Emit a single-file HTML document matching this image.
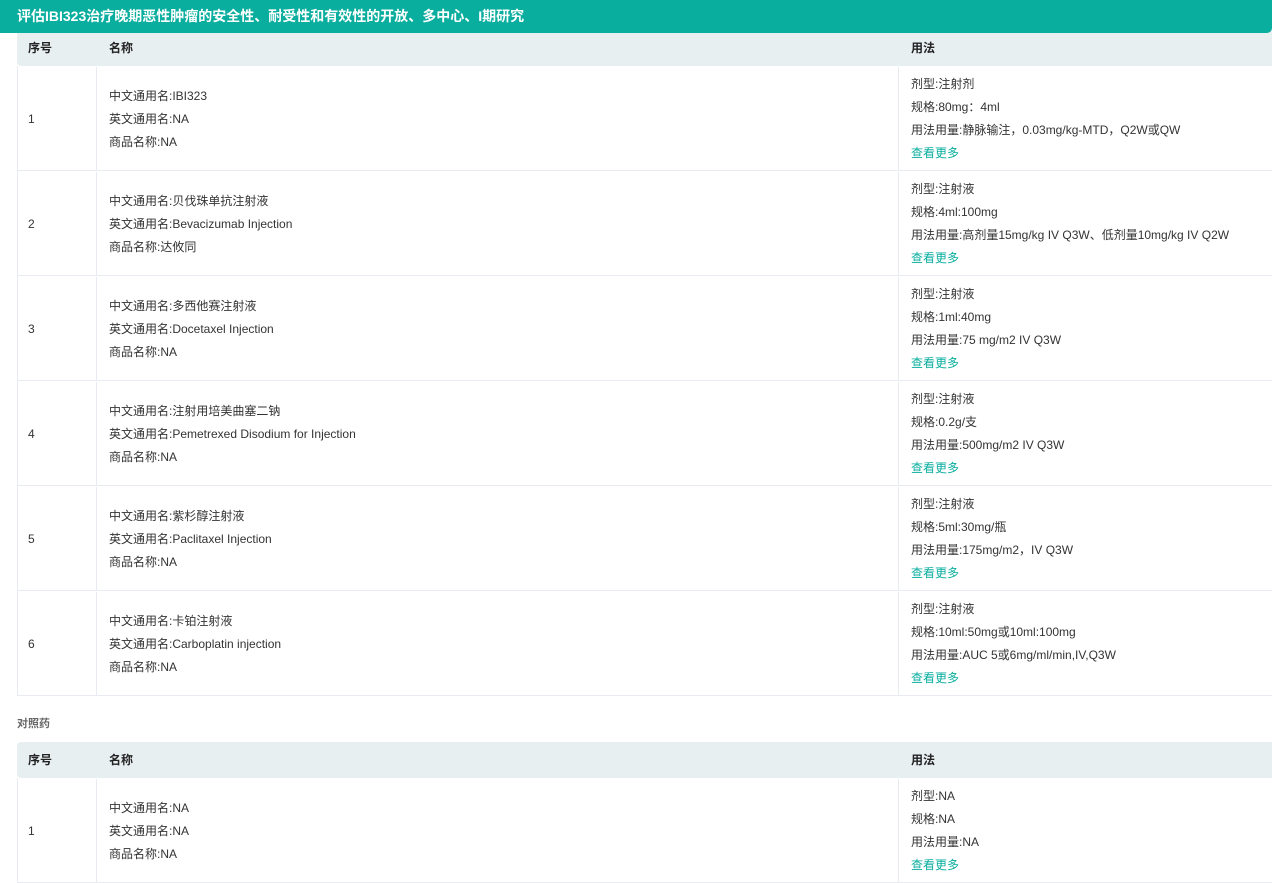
<!DOCTYPE html>
<html><head><meta charset="utf-8"><style>
*{margin:0;padding:0;box-sizing:border-box}
body{width:1272px;height:872px;overflow:hidden;background:#fff;font-family:"Liberation Sans","Noto Sans CJK SC",sans-serif;font-size:12px;color:#333;position:relative}
.bar{position:absolute;left:0;top:0;width:1272px;height:33px;background:#0aae9f;border-bottom-right-radius:5px;color:#fff;font-weight:bold;font-size:14px;line-height:32px;padding-left:17px;z-index:2}
.tbl{position:absolute;left:17px;width:1300px}
.hd{height:36px;background:#e8eff0;border-radius:4px 0 0 4px;position:relative;font-weight:bold;color:#222;font-size:12px}
.hd span{position:absolute;top:0;line-height:36px}
.row{height:105px;border-bottom:1px solid #e8ebf2;border-left:1px solid #e8ebf2;position:relative}
.row .c{position:absolute;top:1px;height:104px;display:flex;flex-direction:column;justify-content:center;line-height:23px}
.c1{left:10px}
.c2{left:78px;width:802px;border-left:1px solid #e8ebf2;padding-left:12px}
.c3{left:880px;border-left:1px solid #e8ebf2;padding-left:12px;width:420px}
.more{color:#0aae9f}
.sub{position:absolute;left:17px;top:715px;font-weight:bold;color:#666;font-size:11px}
</style></head><body>
<div class="bar">评估IBI323治疗晚期恶性肿瘤的安全性、耐受性和有效性的开放、多中心、I期研究</div>
<div class="tbl" style="top:30px">
<div class="hd"><span style="left:11px">序号</span><span style="left:92px">名称</span><span style="left:894px">用法</span></div>
<div class="row"><div class="c c1">1</div><div class="c c2"><div>中文通用名:IBI323</div><div>英文通用名:NA</div><div>商品名称:NA</div></div><div class="c c3"><div>剂型:注射剂</div><div>规格:80mg：4ml</div><div>用法用量:静脉输注，0.03mg/kg-MTD，Q2W或QW</div><div class="more">查看更多</div></div></div>
<div class="row"><div class="c c1">2</div><div class="c c2"><div>中文通用名:贝伐珠单抗注射液</div><div>英文通用名:Bevacizumab Injection</div><div>商品名称:达攸同</div></div><div class="c c3"><div>剂型:注射液</div><div>规格:4ml:100mg</div><div>用法用量:高剂量15mg/kg IV Q3W、低剂量10mg/kg IV Q2W</div><div class="more">查看更多</div></div></div>
<div class="row"><div class="c c1">3</div><div class="c c2"><div>中文通用名:多西他赛注射液</div><div>英文通用名:Docetaxel Injection</div><div>商品名称:NA</div></div><div class="c c3"><div>剂型:注射液</div><div>规格:1ml:40mg</div><div>用法用量:75 mg/m2 IV Q3W</div><div class="more">查看更多</div></div></div>
<div class="row"><div class="c c1">4</div><div class="c c2"><div>中文通用名:注射用培美曲塞二钠</div><div>英文通用名:Pemetrexed Disodium for Injection</div><div>商品名称:NA</div></div><div class="c c3"><div>剂型:注射液</div><div>规格:0.2g/支</div><div>用法用量:500mg/m2 IV Q3W</div><div class="more">查看更多</div></div></div>
<div class="row"><div class="c c1">5</div><div class="c c2"><div>中文通用名:紫杉醇注射液</div><div>英文通用名:Paclitaxel Injection</div><div>商品名称:NA</div></div><div class="c c3"><div>剂型:注射液</div><div>规格:5ml:30mg/瓶</div><div>用法用量:175mg/m2，IV Q3W</div><div class="more">查看更多</div></div></div>
<div class="row"><div class="c c1">6</div><div class="c c2"><div>中文通用名:卡铂注射液</div><div>英文通用名:Carboplatin injection</div><div>商品名称:NA</div></div><div class="c c3"><div>剂型:注射液</div><div>规格:10ml:50mg或10ml:100mg</div><div>用法用量:AUC 5或6mg/ml/min,IV,Q3W</div><div class="more">查看更多</div></div></div>
</div>
<div class="sub">对照药</div>
<div class="tbl" style="top:742px">
<div class="hd"><span style="left:11px">序号</span><span style="left:92px">名称</span><span style="left:894px">用法</span></div>
<div class="row"><div class="c c1">1</div><div class="c c2"><div>中文通用名:NA</div><div>英文通用名:NA</div><div>商品名称:NA</div></div><div class="c c3"><div>剂型:NA</div><div>规格:NA</div><div>用法用量:NA</div><div class="more">查看更多</div></div></div>
</div>
</body></html>
